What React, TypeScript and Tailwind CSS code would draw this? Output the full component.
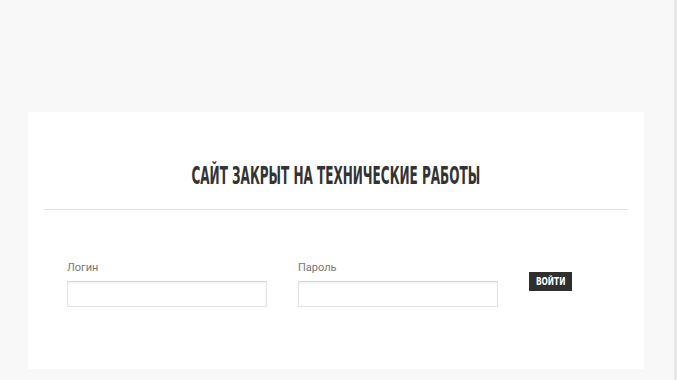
import React from 'react'

const Field = ({ label, type }: { label: string; type: string }) => (
    <div className="flex flex-col w-[200px]">
        <label className="text-[11px] leading-[14px] text-[#777] mb-[6px]">{label}</label>
        <input
            type={type}
            className="h-[26px] w-[200px] border border-[#e3e3e3] border-t-[#d6d6d6] bg-white shadow-[inset_0_1px_2px_rgba(0,0,0,0.06)] outline-none"
        />
    </div>
)

export default function App() {
    return (
        <div
            className="min-h-[380px] w-full bg-[#f8f8f8] border-r-[3px] border-[#e6e6e6] pt-[112px] pl-[28px] pr-[30px] pb-[11px]"
            style={{ fontFamily: 'Roboto, "Open Sans", sans-serif' }}
        >
            <div className="bg-white w-[616px] h-[257px] pt-[50px]">
                <h1
                    className="text-center text-[#333] font-bold text-[25px] leading-[28px] uppercase"
                    style={{ fontFamily: '"DejaVu Sans Condensed", "DejaVu Sans", sans-serif' }}
                >
                    <span className="inline-block scale-x-[0.535] origin-center">Сайт закрыт на технические работы</span>
                </h1>
                <div className="mx-[16px] mt-[19px] border-t border-[#e4e4e4]" />
                <div className="flex items-start pl-[39px] pt-[51px]">
                    <Field label="Логин" type="text" />
                    <div className="w-[31px]" />
                    <Field label="Пароль" type="password" />
                    <div className="w-[31px]" />
                    <button
                        className="mt-[11px] h-[19px] w-[43px] bg-[#2f2f2f] text-white text-[11px] font-bold leading-[19px]"
                        style={{ fontFamily: '"DejaVu Sans Condensed", "DejaVu Sans", sans-serif' }}
                    >
                        <span className="inline-block scale-x-[0.75]">ВОЙТИ</span>
                    </button>
                </div>
            </div>
        </div>
    )
}
